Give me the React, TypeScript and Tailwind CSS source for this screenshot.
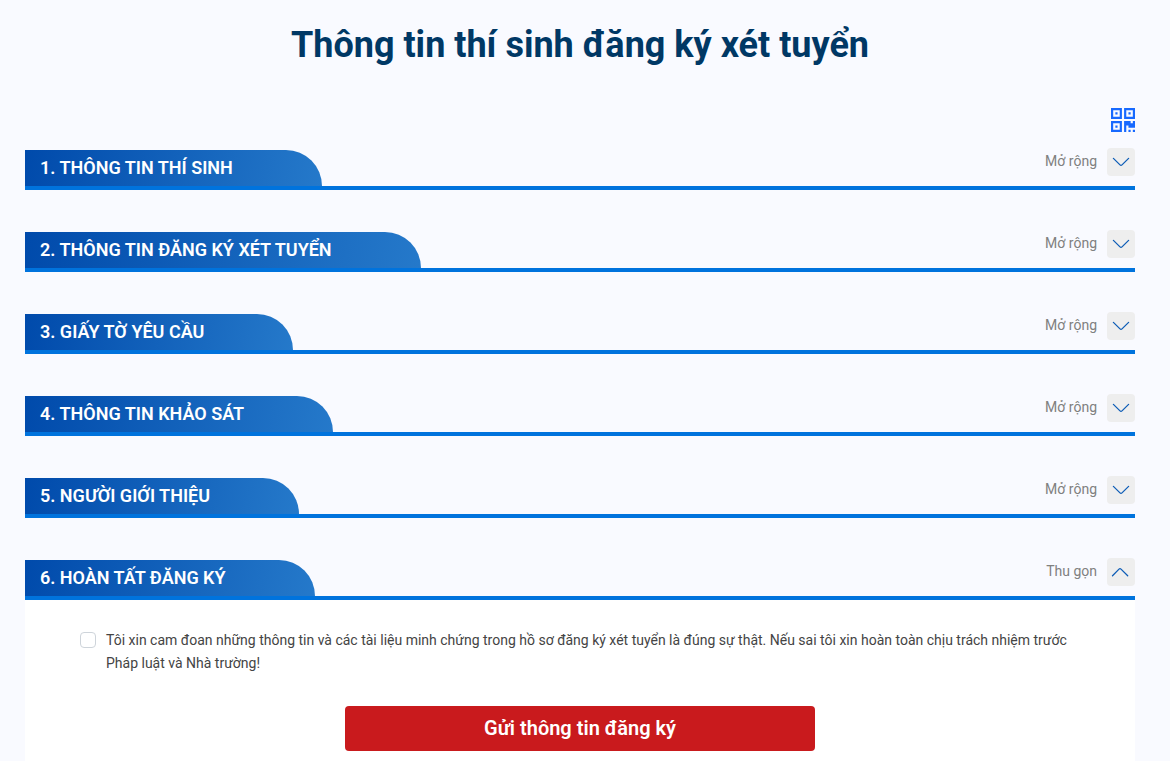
import { useState } from "react";

const sections = [
  "1. THÔNG TIN THÍ SINH",
  "2. THÔNG TIN ĐĂNG KÝ XÉT TUYỂN",
  "3. GIẤY TỜ YÊU CẦU",
  "4. THÔNG TIN KHẢO SÁT",
  "5. NGƯỜI GIỚI THIỆU",
  "6. HOÀN TẤT ĐĂNG KÝ",
];

function QrIcon() {
  return (
    <svg viewBox="0 0 1408 1408" className="size-6" fill="currentColor" aria-hidden="true">
      <path d="M384 1024v128H256v-128h128zM384 256v128H256V256h128zM1152 256v128h-128V256h128zM128 1280h384V896H128v384zM128 512h384V128H128v384zM896 512h384V128H896v384zM640 768v640H0V768h640zM1152 1280v128h-128v-128h128zM1408 1280v128h-128v-128h128zM1408 768v384h-384v-128H896v384H768V768h384v128h128V768h128zM640 0v640H0V0h640zM1408 0v640H768V0h640z" fillRule="evenodd" />
    </svg>
  );
}

function Chevron({ open }: { open: boolean }) {
  return (
    <svg viewBox="0 0 16 16" className="size-4 overflow-visible" fill="none" stroke="currentColor" strokeWidth="1.3" strokeLinecap="round" strokeLinejoin="round" aria-hidden="true">
      {open ? <path d="M-0.5 11.7L6 5.1Q7 4.1 8 5.1L14.7 11.7" /> : <path d="M0.4 4.4L7 10.9Q8 11.9 9 10.9L15.6 4.4" />}
    </svg>
  );
}

function Section({ title, open, onToggle }: { title: string; open: boolean; onToggle: () => void }) {
  return (
    <section>
      <div className="flex items-start justify-between border-b-4 border-[#0073dd]">
        <h2 className="flex h-9 items-center rounded-tr-[36px] bg-linear-[100deg] from-[#004aab] to-[#2579ca] pr-[89px] pl-[15px] text-lg font-semibold text-white">
          {title}
        </h2>
        <button type="button" onClick={onToggle} aria-expanded={open} className="-mt-0.5 flex h-7 cursor-pointer items-start gap-2.5 text-sm leading-[26px] text-[#808080]">
          <span>{open ? "Thu gọn" : "Mở rộng"}</span>
          <span className="flex size-7 items-center justify-center rounded bg-[#eeeeee] text-[#0d5cb6]">
            <Chevron open={open} />
          </span>
        </button>
      </div>
      {open && title === sections[5] && (
        <form className="bg-white px-[55px] pt-[29px] pb-12" onSubmit={(e) => e.preventDefault()}>
          <label className="flex items-start gap-2.5 text-sm leading-[23px] text-[#444444]">
            <input type="checkbox" className="mt-[3px] size-4 shrink-0 appearance-none rounded border border-[#ced4da] bg-white checked:bg-[#0073dd]" />
            <span>
              Tôi xin cam đoan những thông tin và các tài liệu minh chứng trong hồ sơ đăng ký xét tuyển là đúng sự thật. Nếu sai tôi xin hoàn toàn chịu trách nhiệm trước Pháp luật và Nhà trường!
            </span>
          </label>
          <button type="submit" className="mx-auto mt-[31px] block h-[45px] w-[47%] cursor-pointer rounded bg-[#c91a1d] pb-0.5 text-xl font-semibold text-white">
            Gửi thông tin đăng ký
          </button>
        </form>
      )}
    </section>
  );
}

export default function App() {
  const [opened, setOpened] = useState([false, false, false, false, false, true]);
  const toggle = (index: number) => setOpened((prev) => prev.map((v, i) => (i === index ? !v : v)));

  return (
    <main className="min-h-screen bg-[#f9faff] pt-5 pr-[35px] pl-[25px] font-[Roboto,'Liberation_Sans',sans-serif]">
      <h1 className="text-center text-4xl leading-[50px] font-bold text-[#003865]">Thông tin thí sinh đăng ký xét tuyển</h1>
      <div className="mt-[38px] flex justify-end">
        <button type="button" aria-label="QR" className="cursor-pointer text-[#1769ff]">
          <QrIcon />
        </button>
      </div>
      <div className="mt-[18px] flex flex-col gap-[42px]">
        {sections.map((title, i) => (
          <Section key={title} title={title} open={opened[i]} onToggle={() => toggle(i)} />
        ))}
      </div>
    </main>
  );
}
